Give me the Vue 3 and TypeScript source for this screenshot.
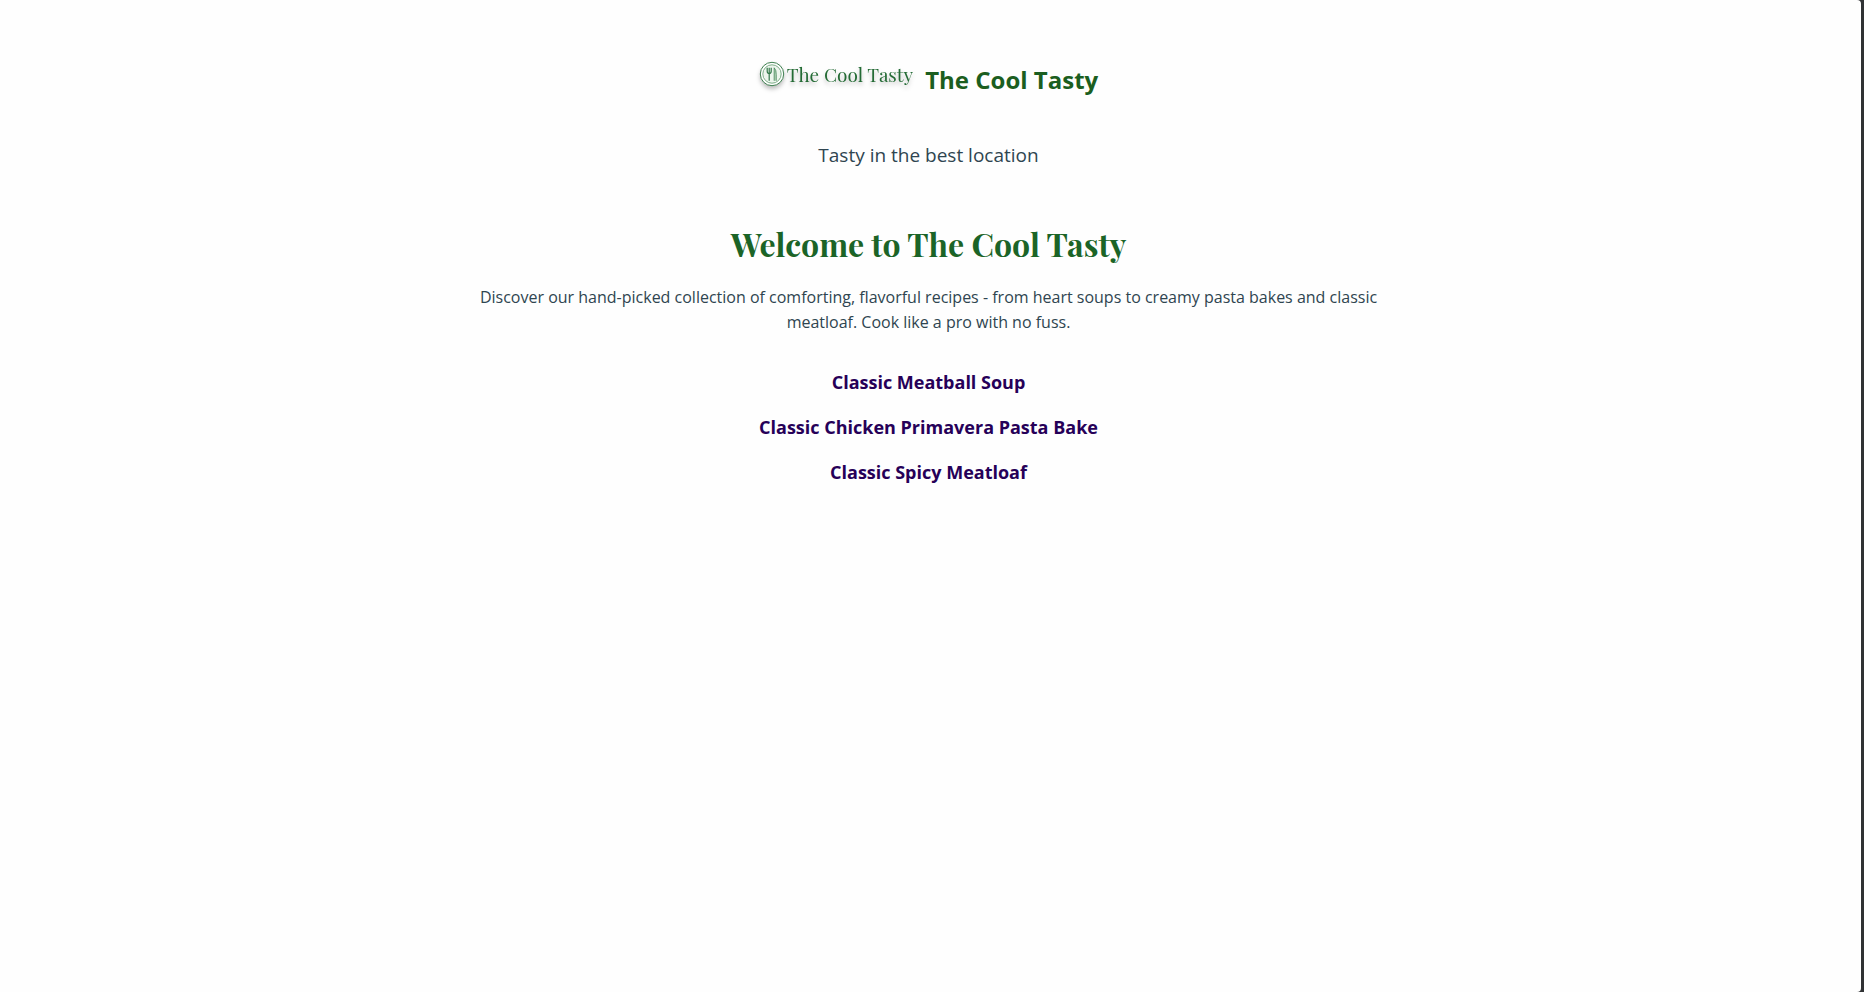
<script setup lang="ts">
interface Recipe {
  name: string
  href: string
}

const siteName = 'The Cool Tasty'
const recipes: Recipe[] = [
  { name: 'Classic Meatball Soup', href: '#meatball-soup' },
  { name: 'Classic Chicken Primavera Pasta Bake', href: '#pasta-bake' },
  { name: 'Classic Spicy Meatloaf', href: '#meatloaf' },
]
</script>

<template>
  <div class="frame">
    <div class="page">
      <header class="header">
        <div class="brand">
          <div class="logo">
            <svg class="emblem" viewBox="0 0 26 26" aria-hidden="true">
              <circle cx="13" cy="13" r="11.7" fill="#fff" stroke="#3d7f4e" stroke-width="1" />
              <circle cx="13" cy="13" r="9.2" fill="#edf5ed" stroke="#6fa57c" stroke-width="0.9" />
              <path d="M8.2 6.8v3.4q0 2.2 2 2.4v7.2M10.2 6.8v5.8M12.2 6.8v3.4q0 2.2-2 2.4" fill="none" stroke="#33794a" stroke-width="1.2" />
              <path d="M15.2 19.8V6.8q2.2 2.2 2 7v6" fill="#c4dcc8" stroke="#4a8a5b" stroke-width="0.9" />
            </svg>
            <span class="wordmark">{{ siteName }}</span>
          </div>
          <span class="site-name">{{ siteName }}</span>
        </div>
        <p class="tagline">Tasty in the best location</p>
      </header>
      <main class="content">
        <h1 class="title">Welcome to {{ siteName }}</h1>
        <p class="intro">
          Discover our hand-picked collection of comforting, flavorful recipes - from heart soups
          to creamy pasta bakes and classic meatloaf. Cook like a pro with no fuss.
        </p>
        <ul class="recipes">
          <li v-for="recipe in recipes" :key="recipe.href">
            <a :href="recipe.href">{{ recipe.name }}</a>
          </li>
        </ul>
      </main>
    </div>
  </div>
</template>

<style>
body {
  margin: 0;
  background: #303234;
}
</style>

<style scoped>
.frame {
  padding-right: 3px;
}

.page {
  box-sizing: border-box;
  min-height: 100vh;
  padding: 56px 4px 56px 0;
  border-radius: 0 4px 4px 0;
  background: #fefefe;
  color: #2f4550;
  font-family: "Open Sans", "Noto Sans", sans-serif;
  text-align: center;
}

.brand {
  display: flex;
  justify-content: center;
  gap: 12px;
  height: 48px;
}

.logo {
  display: flex;
  align-items: center;
  gap: 2px;
  height: 36px;
  filter: drop-shadow(0 3px 2px rgba(0, 0, 0, 0.25));
}

.emblem {
  width: 26px;
  height: 26px;
}

.wordmark {
  color: #246b35;
  font-family: "Playfair Display", "Liberation Serif", serif;
  font-size: 19px;
  line-height: 36px;
}

.site-name {
  color: #1b5e20;
  font-size: 24px;
  font-weight: 700;
  line-height: 48px;
}

.tagline {
  margin: 36px 0 0;
  font-size: 19px;
  line-height: 30px;
}

.content {
  max-width: 900px;
  margin: 48px auto 0;
}

.title {
  margin: 0;
  color: #1b6427;
  font-family: "Playfair Display", "Liberation Serif", serif;
  font-size: 32px;
  font-weight: 700;
  line-height: 52px;
}

.intro {
  margin: 15px 0 0;
  font-size: 16px;
  line-height: 25px;
}

.recipes {
  display: grid;
  gap: 16px;
  margin: 33px 0 0;
  padding: 0;
  list-style: none;
}

.recipes li {
  font-size: 18px;
  line-height: 29px;
}

.recipes a {
  color: #260058;
  font-weight: 700;
  text-decoration: none;
}
</style>
